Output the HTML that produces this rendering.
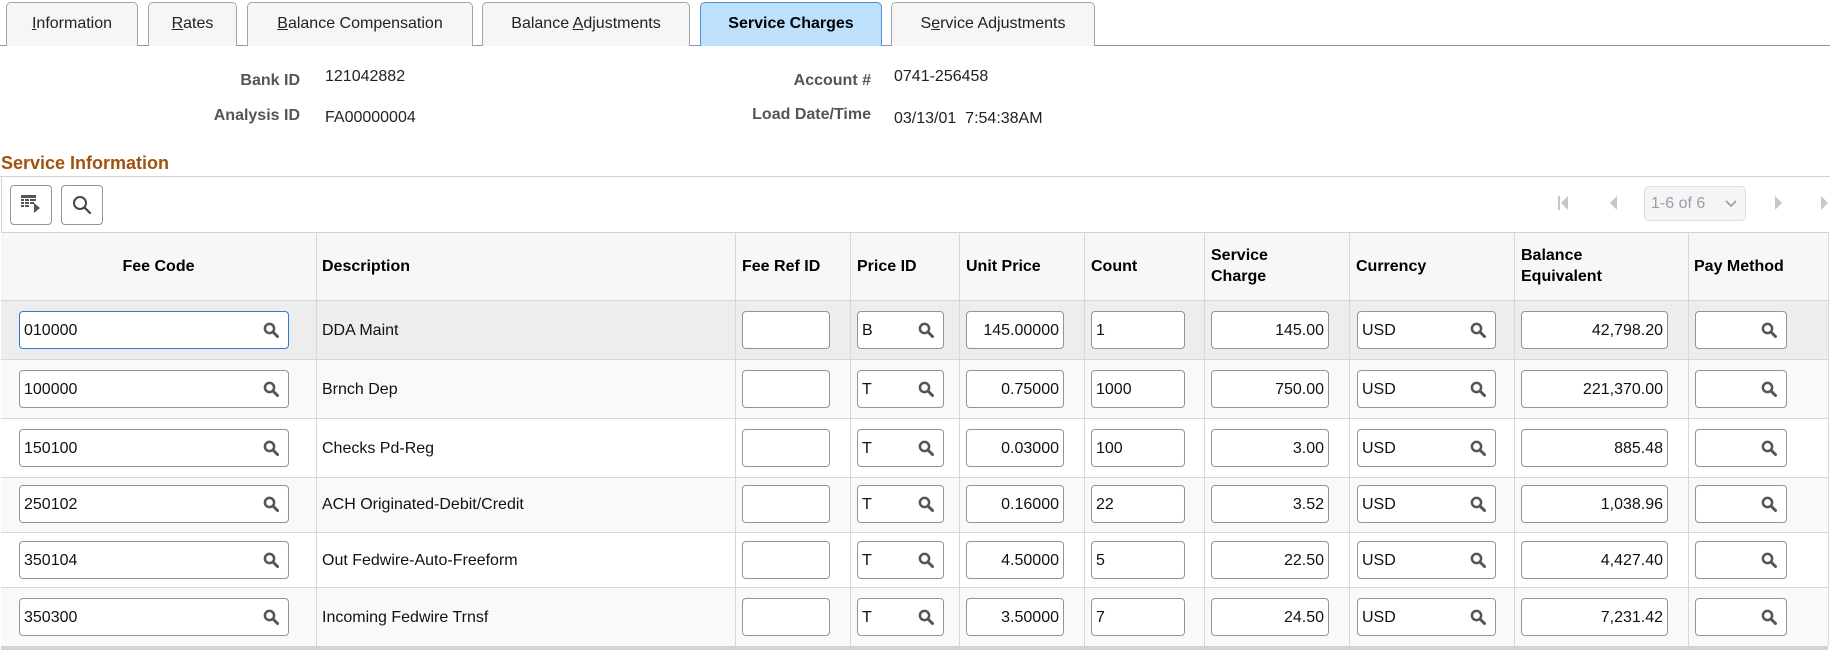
<!DOCTYPE html>
<html><head><meta charset="utf-8">
<style>
*{box-sizing:border-box;margin:0;padding:0}
body{width:1830px;height:651px;background:#fff;font-family:"Liberation Sans",Arial,sans-serif;color:#000;position:relative;overflow:hidden}
.a{position:absolute}
.tab{position:absolute;top:2px;height:44px;border:1px solid #a0a5aa;border-bottom:none;border-radius:5px 5px 0 0;background:#f6f6f6;font-size:16px;line-height:42px;text-align:center;color:#222}
.tab.on{background:#bde0fc;border-color:#4f8fd6;font-weight:bold;color:#000}
.lbl{position:absolute;font-size:16px;font-weight:bold;color:#555;text-align:right}
.val{position:absolute;font-size:16px;color:#222}
.hd{position:absolute;top:232px;height:68px;font-size:16px;font-weight:bold;display:flex;align-items:center;line-height:21px}
.vl{position:absolute;top:232px;height:414px;width:1px;background:#d5d9de}
.row{position:absolute;left:1px;width:1827px;border-top:1px solid #d5d9de}
.in{position:absolute;height:38px;border:1px solid #8e959d;border-radius:4px;background:#fff;font-size:16px;line-height:38px;padding:0 4px;color:#111}
.r{text-align:right}
.mg{position:absolute;right:9px;top:10px;width:16px;height:16px}
.desc{position:absolute;left:322px;font-size:16px;color:#111;top:11px}
</style></head><body>
<div class="a" style="left:0;top:45px;width:1830px;height:1px;background:#8e959d"></div>
<div class="tab" style="left:6px;width:132px"><u>I</u>nformation</div>
<div class="tab" style="left:148px;width:89px"><u>R</u>ates</div>
<div class="tab" style="left:247px;width:226px"><u>B</u>alance Compensation</div>
<div class="tab" style="left:482px;width:208px">Balance <u>A</u>djustments</div>
<div class="tab on" style="left:700px;width:182px">Service Charges</div>
<div class="tab" style="left:891px;width:204px">S<u>e</u>rvice Adjustments</div>

<div class="lbl" style="left:150px;width:150px;top:72px">Bank ID</div>
<div class="val" style="left:325px;top:68px">121042882</div>
<div class="lbl" style="left:150px;width:150px;top:107px">Analysis ID</div>
<div class="val" style="left:325px;top:109px">FA00000004</div>
<div class="lbl" style="left:650px;width:221px;top:72px">Account #</div>
<div class="val" style="left:894px;top:68px">0741-256458</div>
<div class="lbl" style="left:650px;width:221px;top:106px">Load Date/Time</div>
<div class="val" style="left:894px;top:110px">03/13/01&nbsp; 7:54:38AM</div>

<div class="a" style="left:1px;top:153px;font-size:18px;font-weight:bold;color:#a0520f">Service Information</div>
<div class="a" style="left:0;top:176px;width:1830px;height:1px;background:#cfd3d8"></div>
<div class="a" style="left:1px;top:176px;width:1px;height:472px;background:#cfd3d8"></div>

<div class="a" style="left:10px;top:185px;width:42px;height:40px;border:1px solid #8e959d;border-radius:4px"></div>
<svg class="a" style="left:21px;top:194px" width="20" height="20" viewBox="0 0 20 20"><g fill="#555"><rect x="0" y="1" width="15" height="3"/><rect x="0" y="5" width="3" height="2"/><rect x="4" y="5" width="4" height="2"/><rect x="9" y="5" width="6" height="2"/><rect x="0" y="8" width="3" height="2"/><rect x="4" y="8" width="4" height="2"/><rect x="9" y="8" width="4" height="2"/><rect x="0" y="11" width="3" height="2"/><rect x="4" y="11" width="4" height="2"/><path d="M13 9 L19 14 L13 19Z"/></g></svg>
<div class="a" style="left:61px;top:185px;width:42px;height:40px;border:1px solid #8e959d;border-radius:4px"></div>
<svg class="a" style="left:72px;top:195px" width="20" height="20" viewBox="0 0 20 20"><circle cx="8" cy="8" r="6" fill="none" stroke="#444" stroke-width="2"/><line x1="12.5" y1="12.5" x2="18" y2="18" stroke="#444" stroke-width="2.2" stroke-linecap="round"/></svg>

<svg class="a" style="left:1557px;top:194px" width="14" height="18" viewBox="0 0 14 18"><rect x="1" y="2" width="2" height="14" fill="#c4c7cb"/><path d="M11 2 L4 9 L11 16Z" fill="#c4c7cb"/></svg>
<svg class="a" style="left:1608px;top:194px" width="12" height="18" viewBox="0 0 12 18"><path d="M9 2 L2 9 L9 16Z" fill="#c4c7cb"/></svg>
<div class="a" style="left:1644px;top:186px;width:102px;height:35px;border:1px solid #dcdfe3;border-radius:5px;background:#f4f5f6;color:#9a9da1;font-size:16px;line-height:33px;padding-left:6px">1-6 of 6</div>
<svg class="a" style="left:1725px;top:200px" width="12" height="8" viewBox="0 0 12 8"><path d="M1 1 L6 6 L11 1" fill="none" stroke="#9a9da1" stroke-width="1.6"/></svg>
<svg class="a" style="left:1772px;top:194px" width="12" height="18" viewBox="0 0 12 18"><path d="M3 2 L10 9 L3 16Z" fill="#c4c7cb"/></svg>
<svg class="a" style="left:1818px;top:194px" width="12" height="18" viewBox="0 0 12 18"><path d="M3 2 L10 9 L3 16Z" fill="#c4c7cb"/></svg>

<div class="a" style="left:1px;top:232px;width:1827px;height:68px;background:#f7f7f7;border-top:1px solid #cfd3d8"></div>
<div class="hd" style="left:1px;width:315px;justify-content:center">Fee Code</div>
<div class="hd" style="left:322px">Description</div>
<div class="hd" style="left:742px">Fee Ref ID</div>
<div class="hd" style="left:857px">Price ID</div>
<div class="hd" style="left:966px">Unit Price</div>
<div class="hd" style="left:1091px">Count</div>
<div class="hd" style="left:1211px">Service<br>Charge</div>
<div class="hd" style="left:1356px">Currency</div>
<div class="hd" style="left:1521px">Balance<br>Equivalent</div>
<div class="hd" style="left:1694px">Pay Method</div>

<div class="row" style="top:300px;height:59px;background:#ededed"></div>
<div class="row" style="top:359px;height:59px;background:#f9f9f9"></div>
<div class="row" style="top:418px;height:59px;background:#fff"></div>
<div class="row" style="top:477px;height:55px;background:#f9f9f9"></div>
<div class="row" style="top:532px;height:55px;background:#fff"></div>
<div class="row" style="top:587px;height:59px;background:#f9f9f9"></div>
<div class="a" style="left:1px;top:646px;width:1827px;height:4px;background:#d0d4d9"></div>

<div class="vl" style="left:316px"></div><div class="vl" style="left:735px"></div><div class="vl" style="left:850px"></div><div class="vl" style="left:959px"></div><div class="vl" style="left:1084px"></div><div class="vl" style="left:1204px"></div><div class="vl" style="left:1349px"></div><div class="vl" style="left:1514px"></div><div class="vl" style="left:1688px"></div><div class="vl" style="left:1828px"></div>

<svg width="0" height="0" style="position:absolute"><defs><g id="m"><circle cx="6.5" cy="6.5" r="4.6" fill="none" stroke="#555" stroke-width="2.5"/><line x1="10" y1="10" x2="14.5" y2="14.5" stroke="#555" stroke-width="3" stroke-linecap="round"/></g></defs></svg>

<div class="a" style="left:0;top:311px;width:1830px;height:38px">
<div class="in" style="left:19px;width:270px;border-color:#2f7bd0">010000<svg class="mg" viewBox="0 0 16 16"><use href="#m"/></svg></div>
<div class="desc">DDA Maint</div>
<div class="in" style="left:742px;width:88px"></div>
<div class="in" style="left:857px;width:87px">B<svg class="mg" viewBox="0 0 16 16"><use href="#m"/></svg></div>
<div class="in r" style="left:966px;width:98px">145.00000</div>
<div class="in" style="left:1091px;width:94px">1</div>
<div class="in r" style="left:1211px;width:118px">145.00</div>
<div class="in" style="left:1357px;width:139px">USD<svg class="mg" viewBox="0 0 16 16"><use href="#m"/></svg></div>
<div class="in r" style="left:1521px;width:147px">42,798.20</div>
<div class="in" style="left:1695px;width:92px"><svg class="mg" viewBox="0 0 16 16"><use href="#m"/></svg></div>
</div>
<div class="a" style="left:0;top:370px;width:1830px;height:38px">
<div class="in" style="left:19px;width:270px">100000<svg class="mg" viewBox="0 0 16 16"><use href="#m"/></svg></div>
<div class="desc">Brnch Dep</div>
<div class="in" style="left:742px;width:88px"></div>
<div class="in" style="left:857px;width:87px">T<svg class="mg" viewBox="0 0 16 16"><use href="#m"/></svg></div>
<div class="in r" style="left:966px;width:98px">0.75000</div>
<div class="in" style="left:1091px;width:94px">1000</div>
<div class="in r" style="left:1211px;width:118px">750.00</div>
<div class="in" style="left:1357px;width:139px">USD<svg class="mg" viewBox="0 0 16 16"><use href="#m"/></svg></div>
<div class="in r" style="left:1521px;width:147px">221,370.00</div>
<div class="in" style="left:1695px;width:92px"><svg class="mg" viewBox="0 0 16 16"><use href="#m"/></svg></div>
</div>
<div class="a" style="left:0;top:429px;width:1830px;height:38px">
<div class="in" style="left:19px;width:270px">150100<svg class="mg" viewBox="0 0 16 16"><use href="#m"/></svg></div>
<div class="desc">Checks Pd-Reg</div>
<div class="in" style="left:742px;width:88px"></div>
<div class="in" style="left:857px;width:87px">T<svg class="mg" viewBox="0 0 16 16"><use href="#m"/></svg></div>
<div class="in r" style="left:966px;width:98px">0.03000</div>
<div class="in" style="left:1091px;width:94px">100</div>
<div class="in r" style="left:1211px;width:118px">3.00</div>
<div class="in" style="left:1357px;width:139px">USD<svg class="mg" viewBox="0 0 16 16"><use href="#m"/></svg></div>
<div class="in r" style="left:1521px;width:147px">885.48</div>
<div class="in" style="left:1695px;width:92px"><svg class="mg" viewBox="0 0 16 16"><use href="#m"/></svg></div>
</div>
<div class="a" style="left:0;top:485px;width:1830px;height:38px">
<div class="in" style="left:19px;width:270px">250102<svg class="mg" viewBox="0 0 16 16"><use href="#m"/></svg></div>
<div class="desc">ACH Originated-Debit/Credit</div>
<div class="in" style="left:742px;width:88px"></div>
<div class="in" style="left:857px;width:87px">T<svg class="mg" viewBox="0 0 16 16"><use href="#m"/></svg></div>
<div class="in r" style="left:966px;width:98px">0.16000</div>
<div class="in" style="left:1091px;width:94px">22</div>
<div class="in r" style="left:1211px;width:118px">3.52</div>
<div class="in" style="left:1357px;width:139px">USD<svg class="mg" viewBox="0 0 16 16"><use href="#m"/></svg></div>
<div class="in r" style="left:1521px;width:147px">1,038.96</div>
<div class="in" style="left:1695px;width:92px"><svg class="mg" viewBox="0 0 16 16"><use href="#m"/></svg></div>
</div>
<div class="a" style="left:0;top:541px;width:1830px;height:38px">
<div class="in" style="left:19px;width:270px">350104<svg class="mg" viewBox="0 0 16 16"><use href="#m"/></svg></div>
<div class="desc">Out Fedwire-Auto-Freeform</div>
<div class="in" style="left:742px;width:88px"></div>
<div class="in" style="left:857px;width:87px">T<svg class="mg" viewBox="0 0 16 16"><use href="#m"/></svg></div>
<div class="in r" style="left:966px;width:98px">4.50000</div>
<div class="in" style="left:1091px;width:94px">5</div>
<div class="in r" style="left:1211px;width:118px">22.50</div>
<div class="in" style="left:1357px;width:139px">USD<svg class="mg" viewBox="0 0 16 16"><use href="#m"/></svg></div>
<div class="in r" style="left:1521px;width:147px">4,427.40</div>
<div class="in" style="left:1695px;width:92px"><svg class="mg" viewBox="0 0 16 16"><use href="#m"/></svg></div>
</div>
<div class="a" style="left:0;top:598px;width:1830px;height:38px">
<div class="in" style="left:19px;width:270px">350300<svg class="mg" viewBox="0 0 16 16"><use href="#m"/></svg></div>
<div class="desc">Incoming Fedwire Trnsf</div>
<div class="in" style="left:742px;width:88px"></div>
<div class="in" style="left:857px;width:87px">T<svg class="mg" viewBox="0 0 16 16"><use href="#m"/></svg></div>
<div class="in r" style="left:966px;width:98px">3.50000</div>
<div class="in" style="left:1091px;width:94px">7</div>
<div class="in r" style="left:1211px;width:118px">24.50</div>
<div class="in" style="left:1357px;width:139px">USD<svg class="mg" viewBox="0 0 16 16"><use href="#m"/></svg></div>
<div class="in r" style="left:1521px;width:147px">7,231.42</div>
<div class="in" style="left:1695px;width:92px"><svg class="mg" viewBox="0 0 16 16"><use href="#m"/></svg></div>
</div>
</body></html>
